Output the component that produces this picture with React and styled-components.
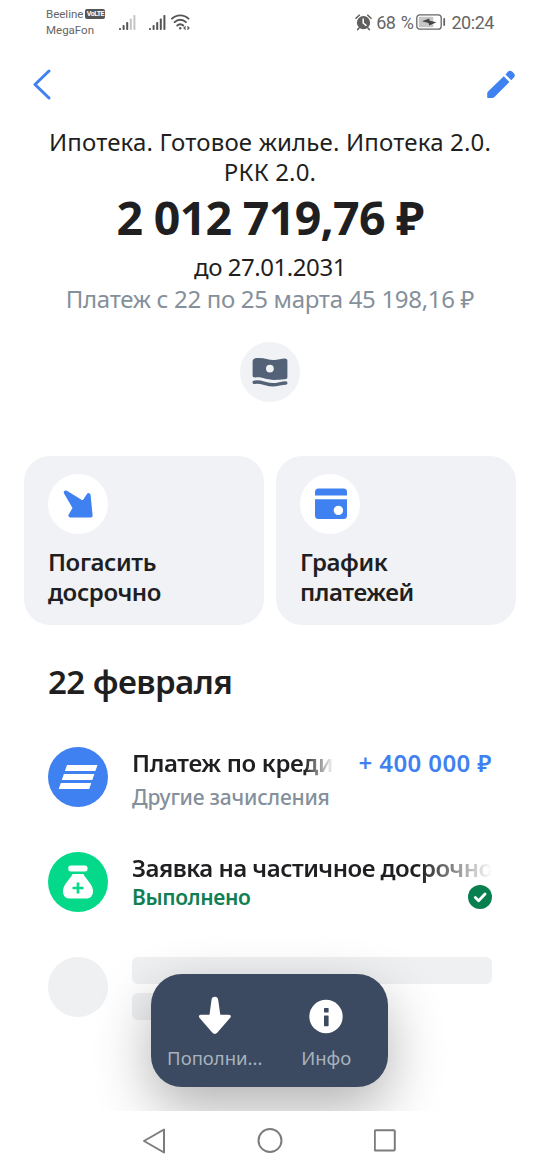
import React from 'react'
import styled, { createGlobalStyle } from 'styled-components'

const colors = {
  text: '#1f1f22',
  grey: '#84909b',
  blue: '#3f81f0',
  card: '#f0f2f6',
  green: '#107f53',
  mint: '#04d98a',
  dock: '#3b4a60',
  dockText: '#a9b2be',
  skeleton: '#eff0f2',
  system: '#666666'
}

const GlobalStyle = createGlobalStyle`
  * {
    box-sizing: border-box;
  }

  body {
    margin: 0;
    background: white;
    font-family: 'Noto Sans', 'Open Sans', sans-serif;
    color: ${colors.text};
  }

  svg {
    display: block;
    flex: none;
  }
`

const Screen = styled.div`
  width: 540px;
  height: 1170px;
  display: flex;
  flex-direction: column;
  background: white;
  overflow: hidden;
`

const Content = styled.main`
  position: relative;
  height: 1111px;
  flex: none;
  overflow: hidden;
`

const Text = styled.div`
  font-size: ${props => props.$size}px;
  line-height: ${props => props.$line}px;
  font-weight: ${props => props.$weight || 400};
  letter-spacing: ${props => props.$track || 0}px;
  color: ${props => props.$color || colors.text};
  white-space: nowrap;
`

const StatusBar = styled.header`
  display: flex;
  align-items: center;
  height: 44px;
  padding: 0 46px;
  color: ${colors.system};
`

const Carriers = styled.div`
  width: 73px;
  font-family: Roboto, sans-serif;
  font-size: 11.5px;
  line-height: 16px;
  padding-bottom: 1px;
`

const Carrier = styled.div`
  display: flex;
  align-items: center;
  gap: 2px;
`

const Volte = styled.span`
  width: 20px;
  height: 10px;
  border-radius: 2px;
  background: #555;
  color: white;
  font-size: 7px;
  line-height: 10px;
  font-weight: 700;
  letter-spacing: -0.5px;
  text-align: center;
`

const Signals = styled.div`
  display: flex;
  align-items: center;
  gap: ${props => props.$gap}px;
`

const StatusRight = styled.div`
  display: flex;
  align-items: center;
  margin-left: auto;
  font-family: Roboto, sans-serif;
  font-size: 18px;
`

const Percent = styled.span`
  margin: 0 3px 0 4px;
  letter-spacing: -0.4px;
  word-spacing: 1px;
`

const Clock = styled.span`
  margin-left: 5px;
  letter-spacing: -0.45px;
`

const TopBar = styled.nav`
  display: flex;
  justify-content: space-between;
  align-items: center;
  height: 80px;
  padding: 0 23px 0 32px;
`

const Summary = styled.section`
  display: flex;
  flex-direction: column;
  align-items: center;
  text-align: center;
  padding-top: 3px;
`

const Round = styled.div`
  width: 60px;
  height: 60px;
  flex: none;
  border-radius: 50%;
  background: ${props => props.$bg};
  display: flex;
  align-items: center;
  justify-content: center;
`

const MoneyBadge = styled(Round)`
  margin-top: 31px;
`

const Actions = styled.section`
  display: grid;
  grid-template-columns: 1fr 1fr;
  gap: 12px;
  padding: 54px 24px 0;
`

const Card = styled.div`
  height: 169px;
  border-radius: 26px;
  background: ${colors.card};
  padding: 18px 24px 0;
`

const CardLabel = styled(Text)`
  margin-top: 13px;
  white-space: pre-line;
`

const Feed = styled.section`
  padding: 35px 48px 0;
`

const Operation = styled.div`
  display: flex;
  gap: 24px;
  height: 60px;
  margin-top: ${props => props.$top}px;
`

const Details = styled.div`
  flex: 1;
  min-width: 0;
  margin-top: -1px;
`

const Row = styled.div`
  display: flex;
  align-items: center;
  justify-content: space-between;
`

const Fading = styled(Text)`
  width: ${props => props.$width}px;
  mask-image: linear-gradient(to right, black calc(100% - ${props => props.$fade}px), transparent);
`

const Placeholder = styled(Details)`
  margin-top: 0;
`

const Skeleton = styled.div`
  width: ${props => props.$width}px;
  height: 27px;
  margin-bottom: 9px;
  border-radius: 6px;
  background: ${colors.skeleton};
`

const Dock = styled.div`
  position: absolute;
  left: 151px;
  top: 974px;
  width: 237px;
  height: 113px;
  border-radius: 31px;
  background: ${colors.dock};
  box-shadow: 0 22px 56px rgba(0, 0, 0, 0.3);
  display: flex;
  padding: 0 6px 0 8px;
`

const DockItem = styled.div`
  flex: 1;
  display: flex;
  flex-direction: column;
  align-items: center;
  gap: 8px;
  padding-top: 22px;
`

const SystemNav = styled.footer`
  height: 59px;
  display: flex;
  justify-content: center;
  align-items: center;
  gap: 91px;
  background: white;
`

const Signal = ({ level }) => (
  <svg width="17" height="16" viewBox="0 0 17 16">
    {[2, 5, 8, 11.5, 15].map((h, i) => (
      <rect key={h} x={i * 3.6} y={16 - h} width="2" height={h} rx="0.8" fill={i < level ? '#555' : '#c4c4c4'} />
    ))}
  </svg>
)

const Wifi = () => (
  <svg width="19" height="16" viewBox="0 0 19 16" fill="none" stroke="#555" strokeWidth="1.9" strokeLinecap="round">
    <path d="M1 4.7C5.5 .2 13 .2 17.5 4.7M3.6 8.2C6.8 5 11.7 5 14.9 8.2M6.3 11.5C8 9.8 10.5 9.8 12.2 11.5" />
    <circle cx="9.2" cy="14.2" r="1.2" fill="#555" stroke="none" />
    <path d="M14.4 12.8L13 14L14.4 15.2M16.6 12.8L18 14L16.6 15.2" strokeWidth="1.2" />
  </svg>
)

const Alarm = () => (
  <svg width="17" height="17" viewBox="0 0 17 17" fill="none" strokeLinecap="round">
    <circle cx="8.5" cy="8.7" r="6.6" fill="#606060" />
    <path d="M1 4.3L4.2 1.2M12.8 1.2L16 4.3M4 14L2.7 15.6M13 14L14.3 15.6" stroke="#606060" strokeWidth="1.6" />
    <path d="M8.2 5V9L11 11.3" stroke="white" strokeWidth="1.5" />
  </svg>
)

const Battery = () => (
  <svg width="30" height="16" viewBox="0 0 30 16">
    <rect x="0.8" y="0.8" width="24.4" height="14.4" rx="3" fill="white" stroke="#666" strokeWidth="1.3" />
    <rect x="2.8" y="2.8" width="14.5" height="10.4" rx="1" fill="#c6c6c6" />
    <path d="M6 7.2L13.2 4.5L13.7 6.8L20.5 8.2L13.3 11.5L12.5 9Z" fill="#444" />
    <path d="M28.2 5V11" stroke="#666" strokeWidth="1.8" strokeLinecap="round" />
  </svg>
)

const Back = () => (
  <svg width="20" height="32" viewBox="0 0 20 32" fill="none" stroke={colors.blue} strokeWidth="3" strokeLinecap="round" strokeLinejoin="round">
    <path d="M17 3L3 16.5L17 30" />
  </svg>
)

const Pencil = () => (
  <svg width="31" height="30" viewBox="0 0 31 30" fill={colors.blue}>
    <path d="M17.8 7.2L23.4 13L8.2 28.3Q7.3 29.1 6 29.1H1.8Q1.2 29.100 1.200 28.300V24.200Q1.400 23.100 2.300 22.300Z" />
    <path d="M19.5 5.6L22.1 2.6Q24.1 .7 26.3 2.700L27.800 4.200Q29.800 6.500 27.800 8.600L25.300 11.200Z" />
  </svg>
)

const Banknote = () => (
  <svg width="36" height="30" viewBox="0 0 36 30" fill="#536277">
    <path fillRule="evenodd" d="M.6 4.5C.6 2 2 1.3 4.5 1.1C12 .3 16 3.1 22 3C26 2.9 29 1.7 32.800 1.600C34.800 1.600 35.400 2.400 35.400 4.300V20C35.400 21.600 34.500 22.200 32.500 22.200C28 22.300 26 23 22 22.900C14 22.700 10 20 3.800 20.400C1.500 20.500 .6 20 .6 18.500ZM17.900 7.700A3.900 3.900 0 1 0 17.900 15.500A3.900 3.900 0 1 0 17.900 7.700Z" />
    <path d="M2.2 25.300C8.500 23.600 14 27.800 21 27.800C26.500 27.800 28.500 26 33.800 26" fill="none" stroke="#536277" strokeWidth="3.4" strokeLinecap="round" />
  </svg>
)

const RepayArrow = () => (
  <svg width="30" height="28" viewBox="0 0 30 28" fill={colors.blue} stroke={colors.blue} strokeWidth="4" strokeLinejoin="round">
    <path d="M2.8 2.5L20.3 13.2L25.6 5.2L27.6 25.5H7.4L11.8 18Z" />
  </svg>
)

const Calendar = () => (
  <svg width="34" height="32" viewBox="-2 0 34 32" fill={colors.blue}>
    <path d="M0 7.5V4Q0 .5 3.5 .5H28.5Q32 .5 32 4V7.5Z" />
    <path fillRule="evenodd" d="M0 11.2H32V27.5Q32 31 28.5 31H3.5Q0 31 0 27.5ZM23.4 17.7A4.7 4.7 0 1 0 23.4 27.1A4.7 4.7 0 1 0 23.4 17.7Z" />
  </svg>
)

const Stripes = () => (
  <svg width="40" height="26" viewBox="0 0 40 26" fill="white">
    <path d="M9 .9H39.5L37.4 6.9H6.9ZM5.9 10H36.4L34.3 16H3.8ZM2.8 19H33.3L31.2 25H.7Z" />
  </svg>
)

const MoneyBag = () => (
  <svg width="30" height="34" viewBox="0 0 30 34" fill="white">
    <rect x="5.3" y="0.5" width="19.2" height="6" rx="2.5" />
    <path d="M9.5 9H20.5C22.5 14 30 19.5 30 26C30 31 27.5 33.5 23 33.5H7C2.5 33.5 0 31 0 26C0 19.5 7.5 14 9.5 9Z" />
    <path d="M15 17.5V28.5M9.5 23H20.5" stroke={colors.mint} strokeWidth="2.7" />
  </svg>
)

const Done = () => (
  <svg width="24" height="24" viewBox="0 0 24 24">
    <circle cx="12" cy="12" r="12" fill="#087f4f" />
    <path d="M7.3 12.5L10.6 15.7L17 9" fill="none" stroke="white" strokeWidth="2.8" strokeLinecap="round" strokeLinejoin="round" />
  </svg>
)

const Down = () => (
  <svg width="34" height="40" viewBox="0 0 34 40" fill="white">
    <path d="M13.5 4Q13.9 .8 16.8 .8Q19.7 .8 20.2 4L22.3 18.8H31Q34 19.3 32.2 21.8L19.4 36.6Q16.8 39.2 14.2 36.6L1.4 21.8Q-.2 19.3 2.8 18.8H11.5Z" />
  </svg>
)

const Info = () => (
  <svg width="34" height="40" viewBox="0 0 34 40">
    <circle cx="17" cy="20.5" r="16.7" fill="white" />
    <rect x="15" y="12" width="4.6" height="4.5" rx="0.6" fill={colors.dock} />
    <rect x="15" y="19.5" width="4.6" height="10.7" rx="0.6" fill={colors.dock} />
  </svg>
)

const cards = [
  { label: 'Погасить\nдосрочно', icon: <RepayArrow /> },
  { label: 'График\nплатежей', icon: <Calendar /> }
]

export default () => (
  <Screen>
    <GlobalStyle />
    <Content>
      <StatusBar>
        <Carriers>
          <Carrier>Beeline <Volte>VoLTE</Volte></Carrier>
          <Carrier>MegaFon</Carrier>
        </Carriers>
        <Signals $gap={13}>
          <Signal level={3} />
          <Signals $gap={5}>
            <Signal level={5} />
            <Wifi />
          </Signals>
        </Signals>
        <StatusRight>
          <Alarm />
          <Percent>68 %</Percent>
          <Battery />
          <Clock>20:24</Clock>
        </StatusRight>
      </StatusBar>

      <TopBar>
        <Back />
        <Pencil />
      </TopBar>

      <Summary>
        <Text $size={24} $line={30} $track={0.17}>Ипотека. Готовое жилье. Ипотека 2.0.<br />РКК 2.0.</Text>
        <Text $size={46.5} $line={60} $weight={700} $track={-0.7}>2 012 719,76 ₽</Text>
        <Text $size={24} $line={40} $track={-0.45}>до 27.01.2031</Text>
        <Text $size={24} $line={24} $track={-0.31} $color={colors.grey}>Платеж с 22 по 25 марта 45 198,16 ₽</Text>
        <MoneyBadge $bg={colors.card}><Banknote /></MoneyBadge>
      </Summary>

      <Actions>
        {cards.map(card => (
          <Card key={card.label}>
            <Round $bg="white">{card.icon}</Round>
            <CardLabel $size={24} $line={30} $weight={600} $track={-0.4}>{card.label}</CardLabel>
          </Card>
        ))}
      </Actions>

      <Feed>
        <Text $size={33} $line={44} $weight={600} $track={-0.55}>22 февраля</Text>
        <Operation $top={43}>
          <Round $bg={colors.blue}><Stripes /></Round>
          <Details>
            <Row>
              <Fading $size={24} $line={34} $weight={600} $track={-0.35} $width={202} $fade={30}>Платеж по креди</Fading>
              <Text $size={24} $line={34} $weight={600} $track={0.4} $color={colors.blue}>+ 400 000 ₽</Text>
            </Row>
            <Text $size={21} $line={34} $weight={500} $track={-0.2} $color={colors.grey}>Другие зачисления</Text>
          </Details>
        </Operation>
        <Operation $top={45}>
          <Round $bg={colors.mint}><MoneyBag /></Round>
          <Details>
            <Fading $size={24} $line={34} $weight={600} $track={-0.52} $width={360} $fade={72}>Заявка на частичное досрочно</Fading>
            <Row>
              <Text $size={21} $line={24} $weight={600} $track={-0.35} $color={colors.green}>Выполнено</Text>
              <Done />
            </Row>
          </Details>
        </Operation>
        <Operation $top={45}>
          <Round $bg={colors.skeleton} />
          <Placeholder>
            <Skeleton $width={360} />
            <Skeleton $width={180} />
          </Placeholder>
        </Operation>
      </Feed>

      <Dock>
        <DockItem>
          <Down />
          <Text $size={18.5} $line={28} $color={colors.dockText}>Пополни...</Text>
        </DockItem>
        <DockItem>
          <Info />
          <Text $size={18.5} $line={28} $color={colors.dockText}>Инфо</Text>
        </DockItem>
      </Dock>
    </Content>

    <SystemNav>
      <svg width="24" height="26" viewBox="0 0 24 26" fill="none" stroke="#7c7c7c" strokeWidth="2" strokeLinejoin="round">
        <path d="M22 1.5V24.5L2 13Z" />
      </svg>
      <svg width="26" height="26" viewBox="0 0 26 26" fill="none" stroke="#7c7c7c" strokeWidth="2">
        <circle cx="13" cy="12.5" r="11.5" />
      </svg>
      <svg width="24" height="26" viewBox="0 0 24 26" fill="none" stroke="#7c7c7c" strokeWidth="2" strokeLinejoin="round">
        <rect x="0.8" y="2.3" width="20" height="20.3" rx="1" />
      </svg>
    </SystemNav>
  </Screen>
)
